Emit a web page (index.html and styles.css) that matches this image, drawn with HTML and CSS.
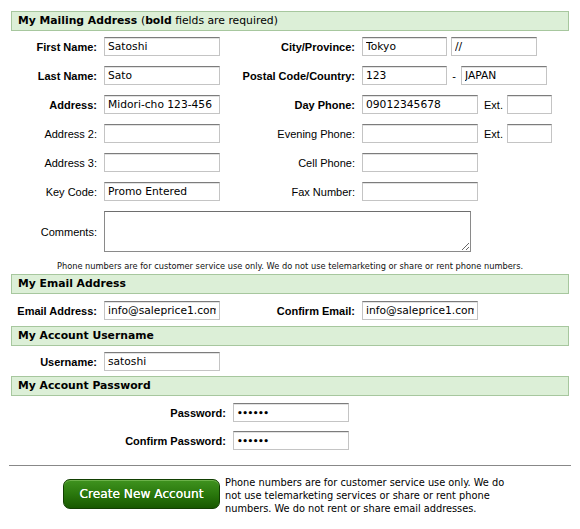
FILE: index.html
```html
<!DOCTYPE html>
<html>
<head>
<meta charset="utf-8">
<link rel="stylesheet" href="styles.css">
</head>
<body>
<div class="page">
  <h2 class="sect first">My Mailing Address <span class="norm">(<b>bold</b> fields are required)</span></h2>
  <div class="grid mailing">
    <label class="lbl req">First Name:</label>
    <div class="cell"><input class="w116" type="text" value="Satoshi"></div>
    <label class="lbl req">City/Province:</label>
    <div class="cell"><input class="w85" type="text" value="Tokyo"><input class="w86 ml4" type="text" value="//"></div>

    <label class="lbl req">Last Name:</label>
    <div class="cell"><input class="w116" type="text" value="Sato"></div>
    <label class="lbl req">Postal Code/Country:</label>
    <div class="cell"><input class="w85" type="text" value="123"><span class="dash">-</span><input class="w86" type="text" value="JAPAN"></div>

    <label class="lbl req">Address:</label>
    <div class="cell"><input class="w116" type="text" value="Midori-cho 123-456"></div>
    <label class="lbl req">Day Phone:</label>
    <div class="cell"><input class="w116" type="text" value="09012345678"><span class="ext">Ext.</span><input class="w45" type="text" value=""></div>

    <label class="lbl">Address 2:</label>
    <div class="cell"><input class="w116" type="text" value=""></div>
    <label class="lbl">Evening Phone:</label>
    <div class="cell"><input class="w116" type="text" value=""><span class="ext">Ext.</span><input class="w45" type="text" value=""></div>

    <label class="lbl">Address 3:</label>
    <div class="cell"><input class="w116" type="text" value=""></div>
    <label class="lbl">Cell Phone:</label>
    <div class="cell"><input class="w116" type="text" value=""></div>

    <label class="lbl">Key Code:</label>
    <div class="cell"><input class="w116" type="text" value="Promo Entered"></div>
    <label class="lbl">Fax Number:</label>
    <div class="cell"><input class="w116" type="text" value=""></div>

    <label class="lbl">Comments:</label>
    <div class="cell span3"><textarea class="comments"></textarea></div>
  </div>
  <p class="note">Phone numbers are for customer service use only. We do not use telemarketing or share or rent phone numbers.</p>

  <h2 class="sect s-email">My Email Address</h2>
  <div class="grid email">
    <label class="lbl req">Email Address:</label>
    <div class="cell"><input class="w116" type="text" value="info@saleprice1.com"></div>
    <label class="lbl req">Confirm Email:</label>
    <div class="cell"><input class="w116" type="text" value="info@saleprice1.com"></div>
  </div>

  <h2 class="sect s-user">My Account Username</h2>
  <div class="grid user">
    <label class="lbl req">Username:</label>
    <div class="cell"><input class="w116" type="text" value="satoshi"></div>
  </div>

  <h2 class="sect s-pass">My Account Password</h2>
  <div class="pgrid">
    <label class="lbl req">Password:</label>
    <div class="cell"><input class="w116" type="password" value="123456"></div>
    <label class="lbl req">Confirm Password:</label>
    <div class="cell"><input class="w116" type="password" value="123456"></div>
  </div>

  <hr class="rule">
  <div class="submit">
    <button class="btn" type="button">Create New Account</button>
    <p class="privacy">Phone numbers are for customer service use only. We do not use telemarketing services or share or rent phone numbers. We do not rent or share email addresses.</p>
  </div>
</div>
</body>
</html>
```
FILE: styles.css
```css
html, body {
  margin: 0;
  padding: 0;
  background: #fff;
}
.page {
  padding: 11px 11px 0 11px;
  width: 558px;
  font-family: "Liberation Sans", Arial, sans-serif;
  font-size: 11px;
  color: #000;
}
.sect {
  margin: 0;
  height: 20px;
  box-sizing: border-box;
  background: #dcefd7;
  border: 1px solid #a7c79e;
  font-family: "DejaVu Sans", Verdana, sans-serif;
  font-size: 10.8px;
  font-weight: bold;
  line-height: 18px;
  padding-left: 6px;
}
.sect .norm { font-weight: normal; }
.sect .norm b { font-weight: bold; }
.s-email { margin-top: 2px; }
.s-user { margin-top: 6px; }
.s-pass { margin-top: 5px; }

.grid {
  display: grid;
  grid-template-columns: 93px 116px 142px 1fr;
  grid-auto-rows: 19px;
  row-gap: 10px;
  align-items: center;
}
.mailing { margin-top: 6px; grid-template-rows: repeat(6, 19px) 41px; }
.email { margin-top: 7px; }
.user { margin-top: 6px; }
.pgrid {
  margin-top: 7px;
  display: grid;
  grid-template-columns: 222px 116px;
  grid-auto-rows: 19px;
  row-gap: 9px;
  align-items: center;
}
.lbl {
  text-align: right;
  padding-right: 7px;
  white-space: nowrap;
  font-size: 11px;
}
.req { font-weight: bold; }
.cell {
  display: flex;
  align-items: center;
  height: 100%;
}
.span3 { grid-column: 2 / 5; }

input {
  box-sizing: border-box;
  height: 19px;
  margin: 0;
  padding: 0 3px;
  border: 1px solid #c4c4c4;
  border-top-color: #7c7c7c;
  box-shadow: inset 0 1px 0 #e2e2e2;
  background: #fff;
  font-family: "DejaVu Sans", Verdana, sans-serif;
  font-size: 10.7px;
  color: #000;
  outline: none;
}
input[type="password"] { letter-spacing: -0.5px; font-size: 9px; font-weight: bold; }
.w116 { width: 116px; }
.w85 { width: 85px; }
.w86 { width: 86px; }
.w45 { width: 45px; }
.ml4 { margin-left: 4px; }
.dash { width: 14px; text-align: center; }
.ext { margin: 0 4px 0 6px; }
.comments {
  box-sizing: border-box;
  width: 367px;
  height: 41px;
  margin: 0;
  border: 1px solid #8a8a8a;
  border-top-color: #6e6e6e;
  background: #fff;
  outline: none;
}
.note {
  margin: 8px 0 0 0;
  height: 12px;
  line-height: 12px;
  text-align: center;
  font-family: "DejaVu Sans", Verdana, sans-serif;
  font-size: 8.25px;
  color: #111;
}
.rule {
  margin: 15px -2px 0 -2px;
  border: 0;
  height: 1px;
  background: #888;
}
.submit {
  display: flex;
  align-items: flex-start;
  margin-top: 10px;
  padding-left: 52px;
  gap: 5px;
}
.btn {
  margin-top: 3px;
  width: 157px;
  height: 30px;
  box-sizing: border-box;
  border: 1px solid #123f02;
  border-radius: 7px;
  background: linear-gradient(#3f931f 0%, #2a780d 50%, #185800 100%);
  box-shadow: inset 0 1px 0 #6cb24a;
  color: #fff;
  font-family: "DejaVu Sans", Verdana, sans-serif;
  font-size: 12.2px;
  text-shadow: 0 0 0.4px #fff;
  padding: 0;
}
.privacy {
  margin: 0;
  width: 283px;
  line-height: 13px;
  font-family: "DejaVu Sans Condensed", "DejaVu Sans", sans-serif;
  font-size: 10.9px;
  color: #000;
}
```
